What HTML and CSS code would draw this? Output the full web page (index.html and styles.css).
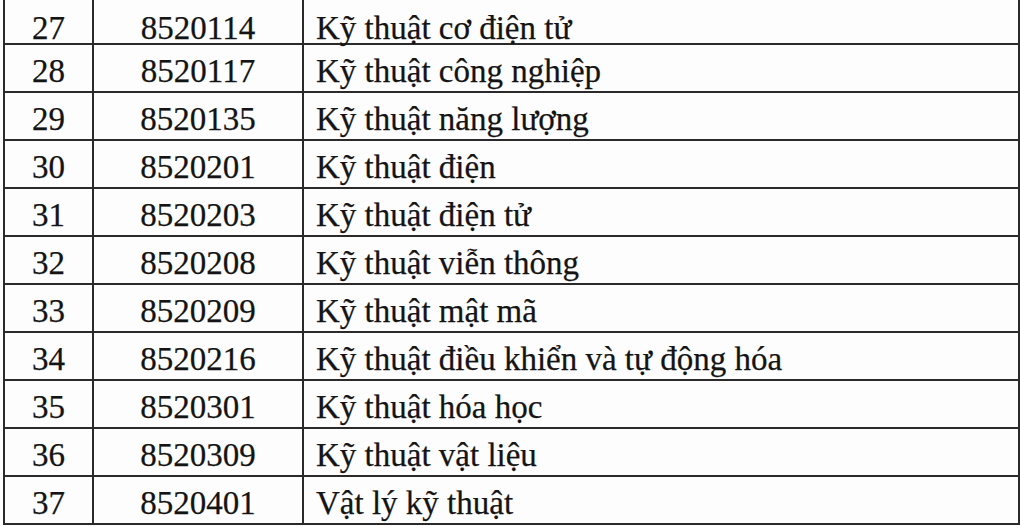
FILE: index.html
```html
<!DOCTYPE html>
<html lang="vi">
<head>
<meta charset="utf-8">
<link rel="stylesheet" href="styles.css">
</head>
<body>
<table class="majors">
  <colgroup>
    <col class="c-no"><col class="c-code"><col class="c-name">
  </colgroup>
  <tbody>
    <tr class="first"><td class="no">27</td><td class="code">8520114</td><td class="name">Kỹ thuật cơ điện tử</td></tr>
    <tr><td class="no">28</td><td class="code">8520117</td><td class="name">Kỹ thuật công nghiệp</td></tr>
    <tr><td class="no">29</td><td class="code">8520135</td><td class="name">Kỹ thuật năng lượng</td></tr>
    <tr><td class="no">30</td><td class="code">8520201</td><td class="name">Kỹ thuật điện</td></tr>
    <tr><td class="no">31</td><td class="code">8520203</td><td class="name">Kỹ thuật điện tử</td></tr>
    <tr><td class="no">32</td><td class="code">8520208</td><td class="name">Kỹ thuật viễn thông</td></tr>
    <tr><td class="no">33</td><td class="code">8520209</td><td class="name">Kỹ thuật mật mã</td></tr>
    <tr><td class="no">34</td><td class="code">8520216</td><td class="name">Kỹ thuật điều khiển và tự động hóa</td></tr>
    <tr><td class="no">35</td><td class="code">8520301</td><td class="name">Kỹ thuật hóa học</td></tr>
    <tr><td class="no">36</td><td class="code">8520309</td><td class="name">Kỹ thuật vật liệu</td></tr>
    <tr><td class="no">37</td><td class="code">8520401</td><td class="name">Vật lý kỹ thuật</td></tr>
  </tbody>
</table>
</body>
</html>
```
FILE: styles.css
```css
html, body {
  margin: 0;
  padding: 0;
  background: #fdfdfd;
  overflow: hidden;
}
.majors {
  margin-left: 3px;
  border-collapse: collapse;
  table-layout: fixed;
  width: 1015px;
  font-family: "Liberation Serif", "Times New Roman", serif;
  font-size: 33px;
  color: #141414;
  -webkit-text-stroke: 0.25px #141414;
}
.c-no { width: 89px; }
.c-code { width: 210px; }
.c-name { width: 716px; }
.majors td {
  height: 48px;
  box-sizing: border-box;
  border: 2px solid #2a2a2a;
  padding: 11px 0 0 0;
  line-height: 30px;
  vertical-align: top;
  white-space: nowrap;
}
.majors tr.first td {
  border-top: none;
  height: 44px;
  padding-top: 13px;
}
.majors td.no, .majors td.code { text-align: center; }
.majors td.name { padding-left: 12px; }
```
